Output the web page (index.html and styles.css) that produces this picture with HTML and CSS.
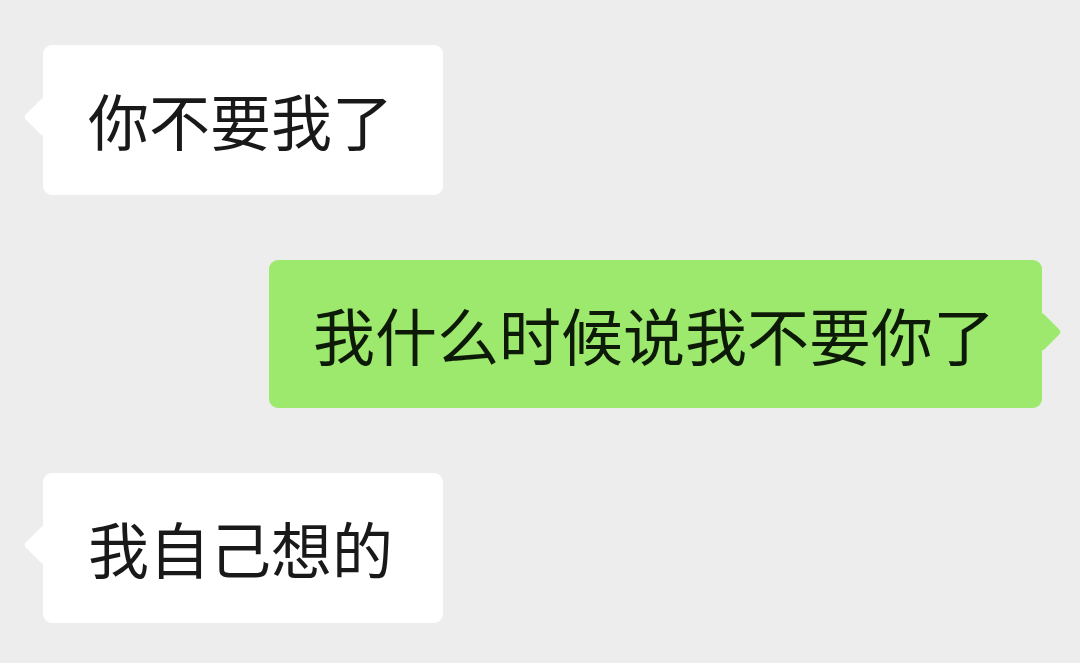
FILE: index.html
```html
<!DOCTYPE html>
<html lang="zh-CN">
<head>
    <meta charset="UTF-8">
    <meta name="viewport" content="width=device-width, initial-scale=1.0">
    <title>聊天</title>
    <link rel="stylesheet" href="styles.css">
</head>
<body>
    <div class="chat">
        <div class="row left">
            <div class="bubble">你不要我了</div>
        </div>
        <div class="row right">
            <div class="bubble">我什么时候说我不要你了</div>
        </div>
        <div class="row left">
            <div class="bubble">我自己想的</div>
        </div>
    </div>
</body>
</html>
```

FILE: styles.css
```css
body {
    margin: 0;
    background-color: #ededed;
    font-family: "Noto Sans CJK SC", "Noto Sans", sans-serif;
}

.chat {
    display: flex;
    flex-direction: column;
    gap: 65px;
    padding: 45px 38px 40px 43px;
}

.row {
    display: flex;
}

.row.right {
    justify-content: flex-end;
}

.bubble {
    position: relative;
    padding: 45px 50px 45px 45px;
    font-size: 61px;
    line-height: 60px;
    color: #191919;
    background-color: #ffffff;
    border-radius: 9px;
    white-space: nowrap;
}

.right .bubble {
    padding: 44px 47px 44px 44px;
    font-size: 62px;
    background-color: #9de96d;
    color: #0e1a08;
}

.bubble::before {
    content: "";
    position: absolute;
    top: 58px;
    width: 28px;
    height: 28px;
    background-color: inherit;
    border-radius: 4px;
    transform: rotate(45deg);
}

.left .bubble::before {
    left: -14px;
}

.right .bubble::before {
    right: -14px;
}
```
